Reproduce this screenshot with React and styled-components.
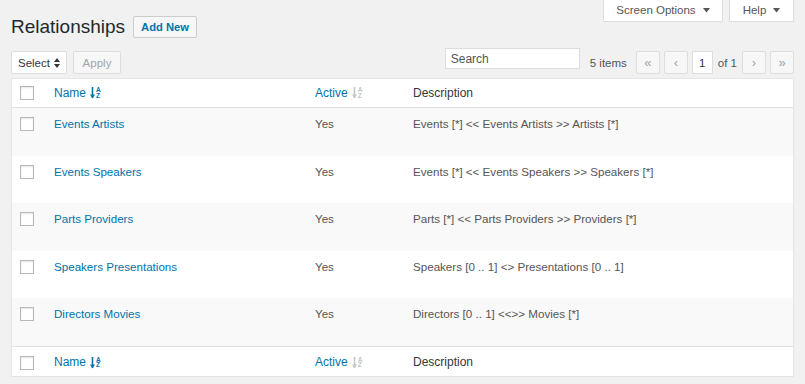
import React from "react";
import styled, { createGlobalStyle } from "styled-components";

const Global = createGlobalStyle`
  html, body { margin: 0; padding: 0; background: #f1f1f1; }
  body { font-family: "Liberation Sans", Arial, sans-serif; color: #444; }
  * { box-sizing: border-box; }
`;

const Page = styled.div`
  padding: 0 11px;
  width: 805px;
`;

const Header = styled.div`
  display: flex;
  justify-content: space-between;
  align-items: flex-start;
`;

const TitleRow = styled.div`
  display: flex;
  align-items: center;
  gap: 8px;
  padding-top: 16px;
`;

const Title = styled.h1`
  margin: 0;
  font-size: 19px;
  font-weight: 400;
  color: #23282d;
  line-height: 22px;
`;

const AddNew = styled.a`
  display: inline-flex;
  align-items: center;
  height: 22px;
  padding: 0 7px;
  border: 1px solid #ccc;
  border-radius: 2px;
  background: #f7f7f7;
  color: #0073aa;
  font-size: 11.2px;
  font-weight: 700;
  text-decoration: none;
`;

const MetaLinks = styled.div`
  display: flex;
  gap: 6px;
`;

const MetaTab = styled.div`
  display: flex;
  align-items: center;
  justify-content: center;
  gap: 7px;
  width: ${(p) => p.$w}px;
  height: 22px;
  background: #fff;
  border: 1px solid #ddd;
  border-top: none;
  color: #555;
  font-size: 11.5px;
  padding-bottom: 1px;
`;

const Tablenav = styled.div`
  display: flex;
  justify-content: space-between;
  align-items: center;
  margin-top: 13px;
  height: 23px;
`;

const Group = styled.div`
  display: flex;
  align-items: center;
  gap: ${(p) => p.$gap || 0}px;
`;

const SelectBox = styled.div`
  display: flex;
  align-items: center;
  gap: 4px;
  width: 56px;
  height: 23px;
  padding-left: 6px;
  background: #fff;
  border: 1px solid #ddd;
  border-radius: 2px;
  color: #32373c;
  font-size: 11.5px;
`;

const Btn = styled.div`
  display: flex;
  align-items: center;
  justify-content: center;
  width: ${(p) => p.$w}px;
  height: 23px;
  background: #f7f7f7;
  border: 1px solid #ddd;
  border-radius: 2px;
  color: #a0a5aa;
  font-size: ${(p) => p.$fs || 11.5}px;
`;

const SearchInput = styled.div`
  display: flex;
  align-items: center;
  width: 135px;
  height: 21px;
  margin-top: -8px;
  margin-right: 10px;
  padding-left: 5px;
  background: #fff;
  border: 1px solid #ddd;
  color: #555;
  font-size: 12px;
`;

const Count = styled.span`
  font-size: 11.5px;
  color: #555;
  margin-right: 9px;
`;

const PageInput = styled.div`
  display: flex;
  align-items: center;
  justify-content: center;
  width: 21px;
  height: 23px;
  background: #fff;
  border: 1px solid #ddd;
  color: #32373c;
  font-size: 11.5px;
`;

const OfText = styled.span`
  font-size: 11.5px;
  color: #555;
  margin: 0 1px;
`;

const Table = styled.div`
  margin-top: 4px;
  width: 783px;
  background: #fff;
  border: 1px solid #e5e5e5;
  box-shadow: 0 1px 1px rgba(0, 0, 0, 0.04);
`;

const Row = styled.div`
  display: grid;
  grid-template-columns: 32px 261px 98px 1fr;
  align-items: ${(p) => (p.$head ? "center" : "start")};
  height: ${(p) => (p.$foot ? "30px" : p.$head ? "29px" : "47.6px")};
  background: ${(p) => (p.$alt ? "#f9f9f9" : "#fff")};
  border-bottom: ${(p) => (p.$head && !p.$foot ? "1px solid #e1e1e1" : "none")};
  border-top: ${(p) => (p.$foot ? "1px solid #e1e1e1" : "none")};
  padding-top: ${(p) => (p.$foot ? 3 : p.$head ? 0 : 6)}px;
  font-size: ${(p) => (p.$head ? 12 : 11.6)}px;
  line-height: 19px;
`;

const CbCell = styled.div`
  padding-left: 8px;
  display: flex;
  padding-top: ${(p) => (p.$head ? 0 : 3)}px;
`;

const Check = styled.span`
  width: 14px;
  height: 14px;
  border: 1px solid #b4b9be;
  background: #fff;
  box-shadow: inset 0 1px 2px rgba(0, 0, 0, 0.1);
`;

const Cell = styled.div`
  padding-left: 10px;
  color: ${(p) => p.$color || "#555"};
  display: flex;
  align-items: center;
`;

const Link = styled.a`
  color: #0073aa;
  text-decoration: none;
`;

const SortWrap = styled.span`
  display: inline-flex;
  align-items: center;
  gap: 1px;
  margin-left: 4px;
  color: ${(p) => p.$c};
`;

const AZ = styled.span`
  display: flex;
  flex-direction: column;
  font-size: 6.5px;
  line-height: 5.5px;
  font-weight: 700;
  margin-top: -1px;
`;

const Tri = ({ color = "#555" }) => (
  <svg width="7" height="5" viewBox="0 0 7 5">
    <path d="M0 0 L7 0 L3.5 4.5 Z" fill={color} />
  </svg>
);

const UpDown = () => (
  <svg width="6" height="10" viewBox="0 0 6 10">
    <path d="M0 4 L6 4 L3 0 Z M0 6 L6 6 L3 10 Z" fill="#32373c" />
  </svg>
);

const SortIcon = ({ color }) => (
  <SortWrap $c={color}>
    <svg width="5" height="12" viewBox="0 0 5 12">
      <path d="M2.5 0 V11" stroke={color} strokeWidth="1.6" />
      <path d="M0 7.5 L5 7.5 L2.5 11.5 Z" fill={color} />
    </svg>
    <AZ>
      <span>A</span>
      <span>Z</span>
    </AZ>
  </SortWrap>
);

const rows = [
  ["Events Artists", "Events [*] << Events Artists >> Artists [*]"],
  ["Events Speakers", "Events [*] << Events Speakers >> Speakers [*]"],
  ["Parts Providers", "Parts [*] << Parts Providers >> Providers [*]"],
  ["Speakers Presentations", "Speakers [0 .. 1] <> Presentations [0 .. 1]"],
  ["Directors Movies", "Directors [0 .. 1] <<>> Movies [*]"],
];

const HeadRow = ({ foot }) => (
  <Row $head $foot={foot}>
    <CbCell $head>
      <Check />
    </CbCell>
    <Cell>
      <Link>Name</Link>
      <SortIcon color="#0073aa" />
    </Cell>
    <Cell>
      <Link>Active</Link>
      <SortIcon color="#c3c7cb" />
    </Cell>
    <Cell $color="#32373c">Description</Cell>
  </Row>
);

export default function App() {
  return (
    <Page>
      <Global />
      <Header>
        <TitleRow>
          <Title>Relationships</Title>
          <AddNew>Add New</AddNew>
        </TitleRow>
        <MetaLinks>
          <MetaTab $w={120}>
            Screen Options <Tri />
          </MetaTab>
          <MetaTab $w={65}>
            Help <Tri />
          </MetaTab>
        </MetaLinks>
      </Header>
      <Tablenav>
        <Group $gap={6}>
          <SelectBox>
            Select <UpDown />
          </SelectBox>
          <Btn $w={48}>Apply</Btn>
        </Group>
        <Group>
          <SearchInput>Search</SearchInput>
          <Count>5 items</Count>
          <Group $gap={4}>
            <Btn $w={24} $fs={13}>«</Btn>
            <Btn $w={24} $fs={13}>‹</Btn>
            <PageInput>1</PageInput>
            <OfText>of 1</OfText>
            <Btn $w={24} $fs={13}>›</Btn>
            <Btn $w={24} $fs={13}>»</Btn>
          </Group>
        </Group>
      </Tablenav>
      <Table>
        <HeadRow />
        {rows.map(([name, desc], i) => (
          <Row key={name} $alt={i % 2 === 0}>
            <CbCell>
              <Check />
            </CbCell>
            <Cell>
              <Link>{name}</Link>
            </Cell>
            <Cell>Yes</Cell>
            <Cell>{desc}</Cell>
          </Row>
        ))}
        <HeadRow foot />
      </Table>
    </Page>
  );
}
